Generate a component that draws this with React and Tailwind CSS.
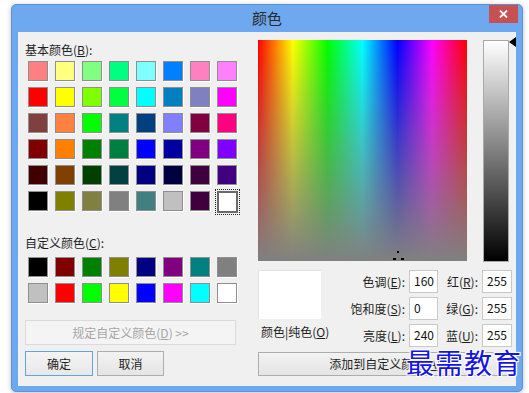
import React from "react";

const basic = [
  ["#FF8080", "#FFFF80", "#80FF80", "#00FF80", "#80FFFF", "#0080FF", "#FF80C0", "#FF80FF"],
  ["#FF0000", "#FFFF00", "#80FF00", "#00FF40", "#00FFFF", "#0080C0", "#8080C0", "#FF00FF"],
  ["#804040", "#FF8040", "#00FF00", "#008080", "#004080", "#8080FF", "#800040", "#FF0080"],
  ["#800000", "#FF8000", "#008000", "#008040", "#0000FF", "#0000A0", "#800080", "#8000FF"],
  ["#400000", "#804000", "#004000", "#004040", "#000080", "#000040", "#400040", "#400080"],
  ["#000000", "#808000", "#808040", "#808080", "#408080", "#C0C0C0", "#400040", "#FFFFFF"],
];

const custom = [
  ["#000000", "#800000", "#008000", "#808000", "#000080", "#800080", "#008080", "#808080"],
  ["#C0C0C0", "#FF0000", "#00FF00", "#FFFF00", "#0000FF", "#FF00FF", "#00FFFF", "#FFFFFF"],
];

function Swatch({ c, selected }) {
  if (selected) {
    return (
      <div className="relative w-[20px] h-[20px]">
        <div className="absolute -left-[2px] -top-[2px] w-[25px] h-[26px] border border-dotted border-[#222]" />
        <div className="w-[21px] h-[22px] -ml-[0px] border-2 border-[#6a6a6a] bg-white" style={{ backgroundColor: c }} />
      </div>
    );
  }
  return (
    <div
      className="w-[20px] h-[20px] border border-[#8f8f8f] shadow-[1px_1px_0_#ffffff]"
      style={{ backgroundColor: c }}
    />
  );
}

function Grid({ rows, selectLast }) {
  return (
    <div className="grid grid-cols-[repeat(8,20px)] gap-x-[7px] gap-y-[6px]">
      {rows.map((r, i) =>
        r.map((c, j) => (
          <Swatch key={i + "-" + j} c={c} selected={selectLast && i === rows.length - 1 && j === 7} />
        ))
      )}
    </div>
  );
}

function Field({ value }) {
  return (
    <div className="h-[23px] bg-white border border-[#c9c9c9] pl-[4px] text-[12px] leading-[20px] text-[#111]">
      {value}
    </div>
  );
}

function Label({ children }) {
  return <div className="h-[23px] pr-[4px] text-right text-[12px] leading-[23px] text-[#1e1e1e] whitespace-nowrap">{children}</div>;
}

export default function App() {
  return (
    <div className="relative min-h-screen bg-white pt-[4px] pl-[11px] font-['Noto_Sans_CJK_SC','Noto_Sans',sans-serif]">
      <div className="w-[512px] h-[388px] rounded-[5px] bg-[#6ea8ef] border border-[#5b92da] shadow-[0_1px_5px_rgba(0,0,0,0.25)] flex flex-col">
        <div className="h-[27px] flex">
          <div className="flex-1" />
          <div className="pt-[3px] text-[15px] leading-[20px] text-[#2a2a2a]">颜色</div>
          <div className="flex-1 flex justify-end">
            <div className="mr-[4px] w-[29px] h-[18px] bg-[#c75050] flex items-center justify-center">
              <svg width="9" height="8" viewBox="0 0 9 8">
                <path d="M1 0.5 L8 7.5 M8 0.5 L1 7.5" stroke="#fff" strokeWidth="1.8" />
              </svg>
            </div>
          </div>
        </div>

        <div className="ml-[6px] w-[498px] h-[354px] bg-[#f0f0f0] flex">
          {/* Left column */}
          <div className="w-[218px] pl-[7px] pt-[10px] flex flex-col">
            <div className="text-[12px] leading-[16px] text-[#1e1e1e]">
              基本颜色(<u>B</u>):
            </div>
            <div className="ml-[3px] mt-[3px]">
              <Grid rows={basic} selectLast />
            </div>
            <div className="mt-[24px] text-[12px] leading-[16px] text-[#1e1e1e]">
              自定义颜色(<u>C</u>):
            </div>
            <div className="ml-[3px] mt-[6px]">
              <Grid rows={custom} />
            </div>
            <div className="mt-[17px] w-[211px] h-[25px] border border-[#dadada] bg-[#f4f4f4] flex items-center justify-center text-[12px] text-[#a6a6a6]">
              规定自定义颜色(<u>D</u>)&nbsp;&gt;&gt;
            </div>
            <div className="mt-[6px] flex gap-[4px]">
              <div className="w-[68px] h-[25px] border border-[#62a3e4] bg-[linear-gradient(#f4f4f4,#e8e8e8)] flex items-center justify-center text-[12px] text-[#1e1e1e]">
                确定
              </div>
              <div className="w-[67px] h-[25px] border border-[#adadad] bg-[linear-gradient(#f2f2f2,#e5e5e5)] flex items-center justify-center text-[12px] text-[#1e1e1e]">
                取消
              </div>
            </div>
          </div>

          {/* Right column */}
          <div className="ml-[22px] pt-[8px] flex flex-col">
            <div className="flex items-start">
              <div className="relative w-[209px] h-[221px] overflow-hidden bg-[linear-gradient(to_bottom,rgba(128,128,128,0),#808080),linear-gradient(to_right,#ff0000,#ffff00,#00ff00,#00ffff,#0000ff,#ff00ff,#ff0000)]">
                <svg className="absolute left-[132px] top-[208px]" width="16" height="14" viewBox="0 0 16 14">
                  <rect x="7" y="3" width="2" height="2" fill="#000" />
                  <rect x="3" y="10" width="3" height="2" fill="#000" />
                  <rect x="11" y="10" width="3" height="2" fill="#000" />
                </svg>
              </div>
              <div className="ml-[16px] w-[26px] h-[222px] border border-[#a8a8a8] bg-[linear-gradient(to_bottom,#ffffff,#000000)]" />
              <svg className="-mt-[3px]" width="7" height="10" viewBox="0 0 7 10">
                <path d="M0 5 L7 0 L7 10 Z" fill="#000" />
              </svg>
            </div>

            <div className="mt-[8px] flex items-start">
              <div className="w-[63px] flex flex-col">
                <div className="h-[49px] bg-white border-t border-l border-[#e2e2e2]" />
                <div className="mt-[5px] pl-[3px] text-[12px] leading-[16px] text-[#1e1e1e] whitespace-nowrap">
                  颜色|纯色(<u>O</u>)
                </div>
              </div>
              <div className="grid grid-cols-[88px_29px_44px_30px] gap-y-[4px]">
                <Label>色调(<u>E</u>):</Label>
                <Field value="160" />
                <Label>红(<u>R</u>):</Label>
                <Field value="255" />
                <Label>饱和度(<u>S</u>):</Label>
                <Field value="0" />
                <Label>绿(<u>G</u>):</Label>
                <Field value="255" />
                <Label>亮度(<u>L</u>):</Label>
                <Field value="240" />
                <Label>蓝(<u>U</u>):</Label>
                <Field value="255" />
              </div>
            </div>

            <div className="mt-[5px] w-[254px] h-[24px] border border-[#adadad] bg-[linear-gradient(#f2f2f2,#e5e5e5)] flex items-center justify-center text-[12px] text-[#1e1e1e]">
              添加到自定义颜色(<u>A</u>)
            </div>
          </div>
        </div>
      </div>

      <div className="absolute left-[406px] top-[345px] text-[28px] leading-[34px] tracking-[1px] text-[#1414e6] font-['Noto_Sans_CJK_SC',sans-serif] [text-shadow:1px_1px_0_#fff,-1px_-1px_0_#fff,1px_-1px_0_#fff,-1px_1px_0_#fff,0_0_3px_#fff]">
        最需教育
      </div>
    </div>
  );
}
